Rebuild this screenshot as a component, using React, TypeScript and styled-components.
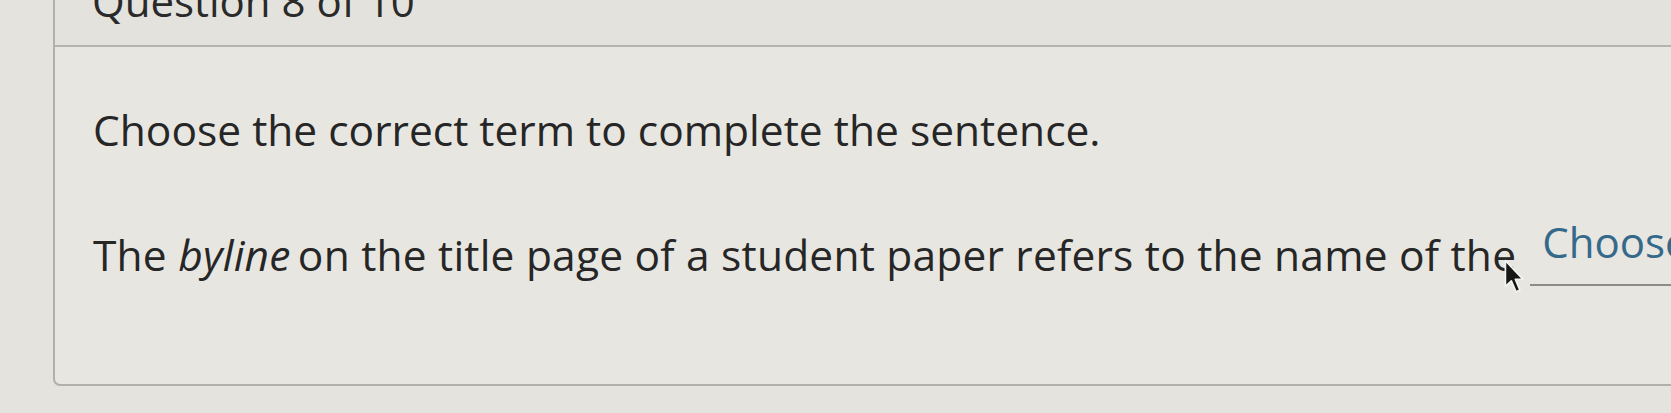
import React from "react";
import styled, { createGlobalStyle } from "styled-components";

const GlobalStyle = createGlobalStyle`
  html, body {
    margin: 0;
    padding: 0;
    background: #e5e3de;
  }
  body {
    font-family: "Open Sans", "Noto Sans", sans-serif;
    color: #262626;
  }
`;

const Page = styled.div`
  width: 1671px;
  height: 413px;
  overflow: hidden;
  background: #e5e3de;
  padding-left: 53px;
  box-sizing: border-box;
`;

const Card = styled.section`
  position: relative;
  width: 1700px;
  height: 386px;
  box-sizing: border-box;
  border-left: 2px solid #b2b0ab;
  border-bottom: 2px solid #b2b0ab;
  border-bottom-left-radius: 7px;
  background: #e8e6e1;
  display: flex;
  flex-direction: column;
`;

const Header = styled.header`
  height: 47px;
  box-sizing: border-box;
  border-bottom: 2px solid #b5b3ae;
  overflow: hidden;
  display: flex;
  align-items: flex-end;
  padding: 0 0 23px 37px;
  background: #e4e2dd;
`;

const HeaderTitle = styled.h2`
  margin: 0;
  font-size: 42px;
  font-weight: 400;
  line-height: 1;
  color: #2a2a2a;
  white-space: nowrap;
`;

const Body = styled.div`
  padding: 53px 0 0 38px;
  display: flex;
  flex-direction: column;
  gap: 57px;
`;

const Prompt = styled.p`
  margin: 0;
  font-size: 42.5px;
  line-height: 1.4;
  white-space: nowrap;
`;

const Sentence = styled.p`
  margin: 0;
  font-size: 42.5px;
  line-height: 1.4;
  letter-spacing: 0.2px;
  white-space: nowrap;
`;

const Term = styled.em`
  font-style: italic;
  margin-right: -4px;
`;

const Blank = styled.span`
  display: inline-block;
  margin-left: 14px;
  padding: 0 40px 17px 12px;
  border-bottom: 2px solid #8d8c89;
  font-size: 42px;
  line-height: 1.2;
  letter-spacing: 0;
  color: #35698a;
  vertical-align: 13px;
`;

const Cursor = styled.svg`
  position: absolute;
  left: 1448px;
  top: 259px;
  width: 22px;
  height: 36px;
`;

export default function App() {
  return (
    <>
      <GlobalStyle />
      <Page>
        <Card>
          <Header>
            <HeaderTitle>Question 8 of 10</HeaderTitle>
          </Header>
          <Body>
            <Prompt>Choose the correct term to complete the sentence.</Prompt>
            <Sentence>
              The <Term>byline</Term> on the title page of a student paper
              refers to the name of the
              <Blank>Choose...</Blank>
            </Sentence>
          </Body>
          <Cursor viewBox="0 0 14 23">
            <path
              d="M1.5 1 L1.5 17.5 L5.3 14 L8.3 21 L10.8 19.9 L7.9 13 L12.8 13 Z"
              fill="#161616"
              stroke="#f2f2f0"
              strokeWidth="1.1"
              strokeLinejoin="round"
            />
          </Cursor>
        </Card>
      </Page>
    </>
  );
}
